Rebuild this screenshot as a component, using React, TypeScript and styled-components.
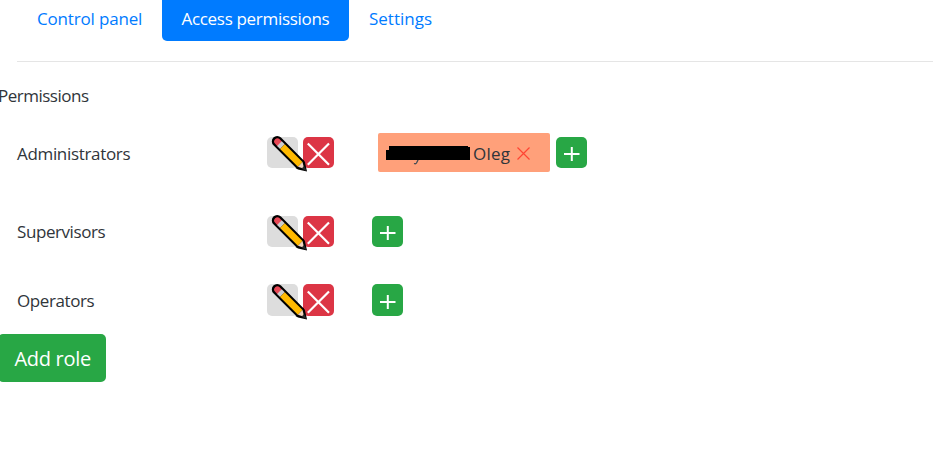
import React from "react";
import styled, { createGlobalStyle } from "styled-components";

const GlobalStyle = createGlobalStyle`
  * { box-sizing: border-box; }
  html, body { margin: 0; background: #fff; overflow: hidden; }
  body {
    font-family: "Open Sans", "Noto Sans", sans-serif;
    font-size: 17px;
    line-height: 26px;
    font-weight: 400;
    color: #30353a;
  }
  button { font: inherit; border: 0; padding: 0; margin: 0; }
`;

const Page = styled.main`
  height: 471px;
  overflow: hidden;
`;

const Nav = styled.nav`
  display: flex;
  height: 62px;
  margin-left: 17px;
  align-items: flex-start;
  border-bottom: 1px solid #e5e5e5;
`;

const Tab = styled.a<{ $width: number; $active?: boolean }>`
  width: ${(p) => p.$width}px;
  height: 41px;
  padding: 6px 0 0 ${(p) => (p.$active ? 19.5 : 20)}px;
  border-radius: 0 0 5px 5px;
  background: ${(p) => (p.$active ? "#007bff" : "transparent")};
  color: ${(p) => (p.$active ? "#fff" : "#007bff")};
  white-space: nowrap;
`;

const Label = styled.span<{ $spacing?: number }>`
  letter-spacing: ${(p) => p.$spacing ?? -0.3}px;
  white-space: nowrap;
`;

const Heading = styled.div`
  height: 51px;
  padding-top: 21px;
  margin-left: -2px;
`;

const Row = styled.div<{ $height: number }>`
  display: grid;
  grid-template-columns: 250px 105px 1fr;
  align-items: center;
  height: ${(p) => p.$height}px;
  padding-left: 17px;
`;

const RoleName = styled(Label)<{ $drop: number }>`
  padding-top: ${(p) => p.$drop}px;
`;

const Actions = styled.div`
  display: flex;
  gap: 5px;
`;

const Square = styled.button<{ $color: string; $height: number; $over?: boolean }>`
  display: flex;
  align-items: flex-end;
  position: relative;
  z-index: ${(p) => (p.$over ? 1 : 0)};
  width: 31px;
  height: ${(p) => p.$height}px;
  border-radius: 5px;
  background: ${(p) => p.$color};
`;

const PencilSvg = styled.svg`
  position: absolute;
  left: 4px;
  bottom: -5px;
`;

const Members = styled.div`
  display: flex;
  align-items: center;
  gap: 6px;
`;

const Tag = styled.div`
  display: flex;
  align-items: center;
  width: 172px;
  height: 39px;
  margin-left: 6px;
  padding: 2px 0 0 8px;
  border-radius: 2px;
  background: #ffa07a;
`;

const Redaction = styled.svg`
  flex: none;
  margin-right: 3px;
`;

const Remove = styled.svg`
  margin: 0 0 0 6px;
`;

const AddRole = styled.button`
  display: block;
  width: 108px;
  height: 48px;
  margin: 5px 0 0 -2px;
  padding: 2px 0 0 16.5px;
  border-radius: 5px;
  background: #28a745;
  color: #fff;
  font-size: 20px;
  text-align: left;
`;

const Pencil = () => (
  <PencilSvg width="38" height="38" viewBox="0 0 38 38" fill="none">
    <path d="M6.2 6.4L28.5 28.7" stroke="#000" strokeWidth="10.8" strokeLinecap="round" />
    <path d="M32.5 25L34 27.5L36 36.5L27 34.6L24.5 33Z" fill="#000" />
    <path d="M6.4 6.6L8 8.2" stroke="#e74856" strokeWidth="6.4" strokeLinecap="round" />
    <path d="M8.4 8.6L11.4 11.6" stroke="#ccc" strokeWidth="6.6" />
    <path d="M11.4 11.6L29.2 29.4" stroke="#ffb900" strokeWidth="6.6" />
    <path d="M31.5 27L33.2 33.7L26.9 31.8Z" fill="#f2d4bd" />
    <path d="M33 31L35.6 36.1L30.5 33.8Z" fill="#292929" />
  </PencilSvg>
);

const Cross = () => (
  <svg width="31" height="31" viewBox="0 0 31 31">
    <path d="M4.8 6.5L26 27.7M26 6.5L4.8 27.7" stroke="#fff" strokeWidth="2.2" fill="none" />
  </svg>
);

const Plus = () => (
  <svg width="31" height="31" viewBox="0 0 31 31">
    <path d="M8 17H23.5M15.8 10V24" stroke="#fff" strokeWidth="2" fill="none" />
  </svg>
);

const roles = [
  { name: "Administrators", height: 79, button: 31, spacing: -0.33, drop: 2, member: "Oleg" },
  { name: "Supervisors", height: 79, button: 31, spacing: -0.42, drop: 0 },
  { name: "Operators", height: 58, button: 32, spacing: -0.4, drop: 1 },
];

export default function App() {
  return (
    <>
      <GlobalStyle />
      <Page>
        <Nav>
          <Tab $width={145}><Label $spacing={-0.17}>Control panel</Label></Tab>
          <Tab $width={187} $active><Label $spacing={-0.31}>Access permissions</Label></Tab>
          <Tab $width={100}><Label $spacing={0}>Settings</Label></Tab>
        </Nav>
        <Heading><Label $spacing={-0.5}>Permissions</Label></Heading>
        {roles.map((role) => (
          <Row key={role.name} $height={role.height}>
            <RoleName $spacing={role.spacing} $drop={role.drop}>{role.name}</RoleName>
            <Actions>
              <Square $color="#ddd" $height={role.button} $over aria-label="Edit"><Pencil /></Square>
              <Square $color="#dc3545" $height={role.button} aria-label="Delete"><Cross /></Square>
            </Actions>
            <Members>
              {role.member && (
                <Tag>
                  <Redaction width="84" height="22" viewBox="0 0 84 22">
                    <path d="M33 15L30.5 20Q29.8 21.2 28 20.5" fill="none" stroke="#444c54" strokeWidth="1.3" />
                    <path d="M3 3H82V4H84V17H0V7H3Z" fill="#000" />
                  </Redaction>
                  <Label $spacing={0.25}>{role.member}</Label>
                  <Remove width="15" height="15" viewBox="0 0 15 15">
                    <path d="M1.5 1.5L13.5 13.5M13.5 1.5L1.5 13.5" stroke="#ff4433" strokeWidth="1.2" />
                  </Remove>
                </Tag>
              )}
              <Square $color="#28a745" $height={role.button} aria-label="Add member"><Plus /></Square>
            </Members>
          </Row>
        ))}
        <AddRole><Label>Add role</Label></AddRole>
      </Page>
    </>
  );
}
